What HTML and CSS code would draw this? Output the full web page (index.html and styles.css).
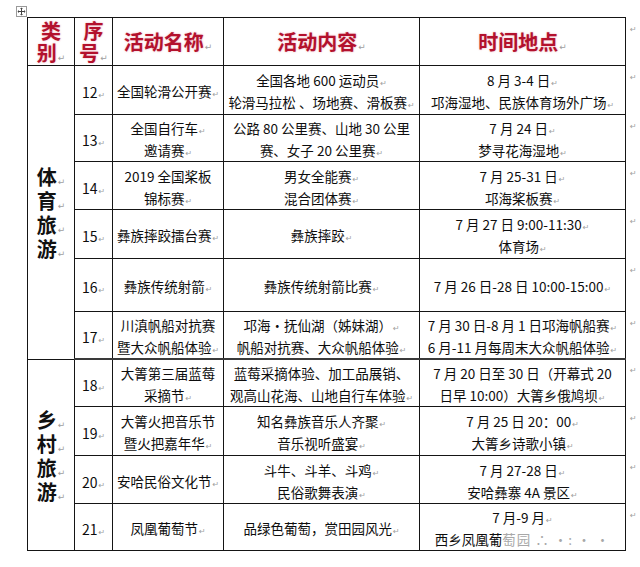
FILE: index.html
```html
<!DOCTYPE html>
<html lang="zh-CN">
<head>
<meta charset="utf-8">
<title>活动安排</title>
<link rel="stylesheet" href="styles.css">
</head>
<body>
<div class="page">
  <svg class="handle" width="11" height="11" viewBox="0 0 11 11">
    <rect x="0.5" y="0.5" width="10" height="10" fill="#fff" stroke="#9a9a9a"/>
    <path d="M5.5 2v7M2 5.5h7" stroke="#444" stroke-width="1"/>
    <path d="M5.5 1.5l-1.5 1.5h3zM5.5 9.5l-1.5-1.5h3zM1.5 5.5l1.5-1.5v3zM9.5 5.5l-1.5-1.5v3z" fill="#444"/>
  </svg>
  <table class="events">
    <colgroup>
      <col class="c-cat"><col class="c-no"><col class="c-name"><col class="c-desc"><col class="c-time"><col class="c-eol">
    </colgroup>
    <tr class="r-head">
      <td class="hd">类<br>别<span class="pm">↵</span></td>
      <td class="hd">序<br>号<span class="pm">↵</span></td>
      <td class="hd">活动名称<span class="pm">↵</span></td>
      <td class="hd">活动内容<span class="pm">↵</span></td>
      <td class="hd">时间地点<span class="pm">↵</span></td>
      <td class="eol"><span class="pm">↵</span></td>
    </tr>
    <tr class="r49">
      <td class="cat" rowspan="6">体<span class="pm">↵</span><br>育<span class="pm">↵</span><br>旅<span class="pm">↵</span><br>游<span class="pm">↵</span></td>
      <td class="no">12<span class="pm">↵</span></td>
      <td>全国轮滑公开赛<span class="pm">↵</span></td>
      <td>全国各地 600 运动员<span class="pm">↵</span><br>轮滑马拉松 、场地赛、滑板赛<span class="pm">↵</span></td>
      <td>8 月 3-4 日<span class="pm">↵</span><br>邛海湿地、民族体育场外广场<span class="pm">↵</span></td>
      <td class="eol"><span class="pm">↵</span></td>
    </tr>
    <tr class="r47">
      <td class="no">13<span class="pm">↵</span></td>
      <td>全国自行车<span class="pm">↵</span><br>邀请赛<span class="pm">↵</span></td>
      <td>公路 80 公里赛、山地 30 公里<br>赛、女子 20 公里赛<span class="pm">↵</span></td>
      <td>7 月 24 日<span class="pm">↵</span><br>梦寻花海湿地<span class="pm">↵</span></td>
      <td class="eol"><span class="pm">↵</span></td>
    </tr>
    <tr class="r48">
      <td class="no">14<span class="pm">↵</span></td>
      <td>2019 全国桨板<br>锦标赛<span class="pm">↵</span></td>
      <td>男女全能赛<span class="pm">↵</span><br>混合团体赛<span class="pm">↵</span></td>
      <td>7 月 25-31 日<span class="pm">↵</span><br>邛海桨板赛<span class="pm">↵</span></td>
      <td class="eol"><span class="pm">↵</span></td>
    </tr>
    <tr class="r49">
      <td class="no">15<span class="pm">↵</span></td>
      <td>彝族摔跤擂台赛<span class="pm">↵</span></td>
      <td>彝族摔跤<span class="pm">↵</span></td>
      <td>7 月 27 日 9:00-11:30<span class="pm">↵</span><br>体育场<span class="pm">↵</span></td>
      <td class="eol"><span class="pm">↵</span></td>
    </tr>
    <tr class="r53">
      <td class="no">16<span class="pm">↵</span></td>
      <td>彝族传统射箭<span class="pm">↵</span></td>
      <td>彝族传统射箭比赛<span class="pm">↵</span></td>
      <td>7 月 26 日-28 日 10:00-15:00<span class="pm">↵</span></td>
      <td class="eol"><span class="pm">↵</span></td>
    </tr>
    <tr class="r47 sect-end">
      <td class="no">17<span class="pm">↵</span></td>
      <td>川滇帆船对抗赛<br>暨大众帆船体验<span class="pm">↵</span></td>
      <td>邛海·抚仙湖（姊妹湖）<span class="pm">↵</span><br>帆船对抗赛、大众帆船体验<span class="pm">↵</span></td>
      <td>7 月 30 日-8 月 1 日邛海帆船赛<span class="pm">↵</span><br>6 月-11 月每周末大众帆船体验<span class="pm">↵</span></td>
      <td class="eol"><span class="pm">↵</span></td>
    </tr>
    <tr class="r47">
      <td class="cat" rowspan="4">乡<span class="pm">↵</span><br>村<span class="pm">↵</span><br>旅<span class="pm">↵</span><br>游<span class="pm">↵</span></td>
      <td class="no">18<span class="pm">↵</span></td>
      <td>大箐第三届蓝莓<br>采摘节<span class="pm">↵</span></td>
      <td>蓝莓采摘体验、加工品展销、<br>观高山花海、山地自行车体验<span class="pm">↵</span></td>
      <td>7 月 20 日至 30 日（开幕式 20<br>日早 10:00）大箐乡俄鸠坝<span class="pm">↵</span></td>
      <td class="eol"><span class="pm">↵</span></td>
    </tr>
    <tr class="r49">
      <td class="no">19<span class="pm">↵</span></td>
      <td>大箐火把音乐节<br>暨火把嘉年华<span class="pm">↵</span></td>
      <td>知名彝族音乐人齐聚<span class="pm">↵</span><br>音乐视听盛宴<span class="pm">↵</span></td>
      <td>7 月 25 日 20：00<span class="pm">↵</span><br>大箐乡诗歌小镇<span class="pm">↵</span></td>
      <td class="eol"><span class="pm">↵</span></td>
    </tr>
    <tr class="r48">
      <td class="no">20<span class="pm">↵</span></td>
      <td>安哈民俗文化节<span class="pm">↵</span></td>
      <td>斗牛、斗羊、斗鸡<span class="pm">↵</span><br>民俗歌舞表演<span class="pm">↵</span></td>
      <td>7 月 27-28 日<span class="pm">↵</span><br>安哈彝寨 4A 景区<span class="pm">↵</span></td>
      <td class="eol"><span class="pm">↵</span></td>
    </tr>
    <tr class="r47">
      <td class="no">21<span class="pm">↵</span></td>
      <td>凤凰葡萄节<span class="pm">↵</span></td>
      <td>品绿色葡萄，赏田园风光<span class="pm">↵</span></td>
      <td>7 月-9 月<span class="pm">↵</span><br>西乡凤凰葡<span class="wm">萄园 ∴ ·: ·  ·</span></td>
      <td class="eol"><span class="pm">↵</span></td>
    </tr>
  </table>
</div>
</body>
</html>
```
FILE: styles.css
```css
body {
  margin: 0;
  background: #ffffff;
  font-family: "Noto Sans CJK SC", "Noto Sans", sans-serif;
  color: #0d0d0d;
}

.page {
  padding-top: 6px;
}

.handle {
  display: block;
  margin-left: 16px;
}

.events {
  margin-left: 27px;
  border-collapse: collapse;
  table-layout: fixed;
  width: 613px;
}

.c-cat { width: 47px; }
.c-no { width: 38px; }
.c-name { width: 111px; }
.c-desc { width: 196px; }
.c-time { width: 206px; }
.c-eol { width: 15px; }

.events td {
  border: 1px solid #151515;
  text-align: center;
  vertical-align: middle;
  padding: 2px 2px 0;
  font-size: 13.5px;
  line-height: 22px;
  white-space: nowrap;
  overflow: hidden;
  box-sizing: border-box;
}

.r-head td { height: 48px; }
.r47 td { height: 47px; }
.r48 td { height: 48px; }
.r49 td { height: 49px; }
.r53 td { height: 53px; }

.sect-end td {
  border-bottom: 2px solid #3a3a3a;
}

.events td.hd {
  font-size: 20px;
  font-weight: 700;
  line-height: 22px;
  color: #b3112d;
  text-shadow: 0 0 2px rgba(210, 60, 90, 0.45);
  padding-top: 1px;
}

.events td.cat {
  font-size: 20px;
  font-weight: 700;
  line-height: 24px;
  color: #111;
  padding-top: 2px;
}

.events td.no {
  font-size: 14px;
  padding-top: 4px;
}

.events td.eol {
  border: none;
  vertical-align: top;
  text-align: left;
  padding: 2px 0 0 3px;
  line-height: 12px;
}

.pm {
  font-family: "DejaVu Sans", sans-serif;
  font-size: 8px;
  line-height: 0;
  font-weight: 400;
  color: #a0a0a0;
  text-shadow: none;
  margin-left: 1px;
}

.hd .pm, .cat .pm {
  font-size: 9px;
}

.wm {
  color: #a8a8a8;
  letter-spacing: 1px;
}
```
